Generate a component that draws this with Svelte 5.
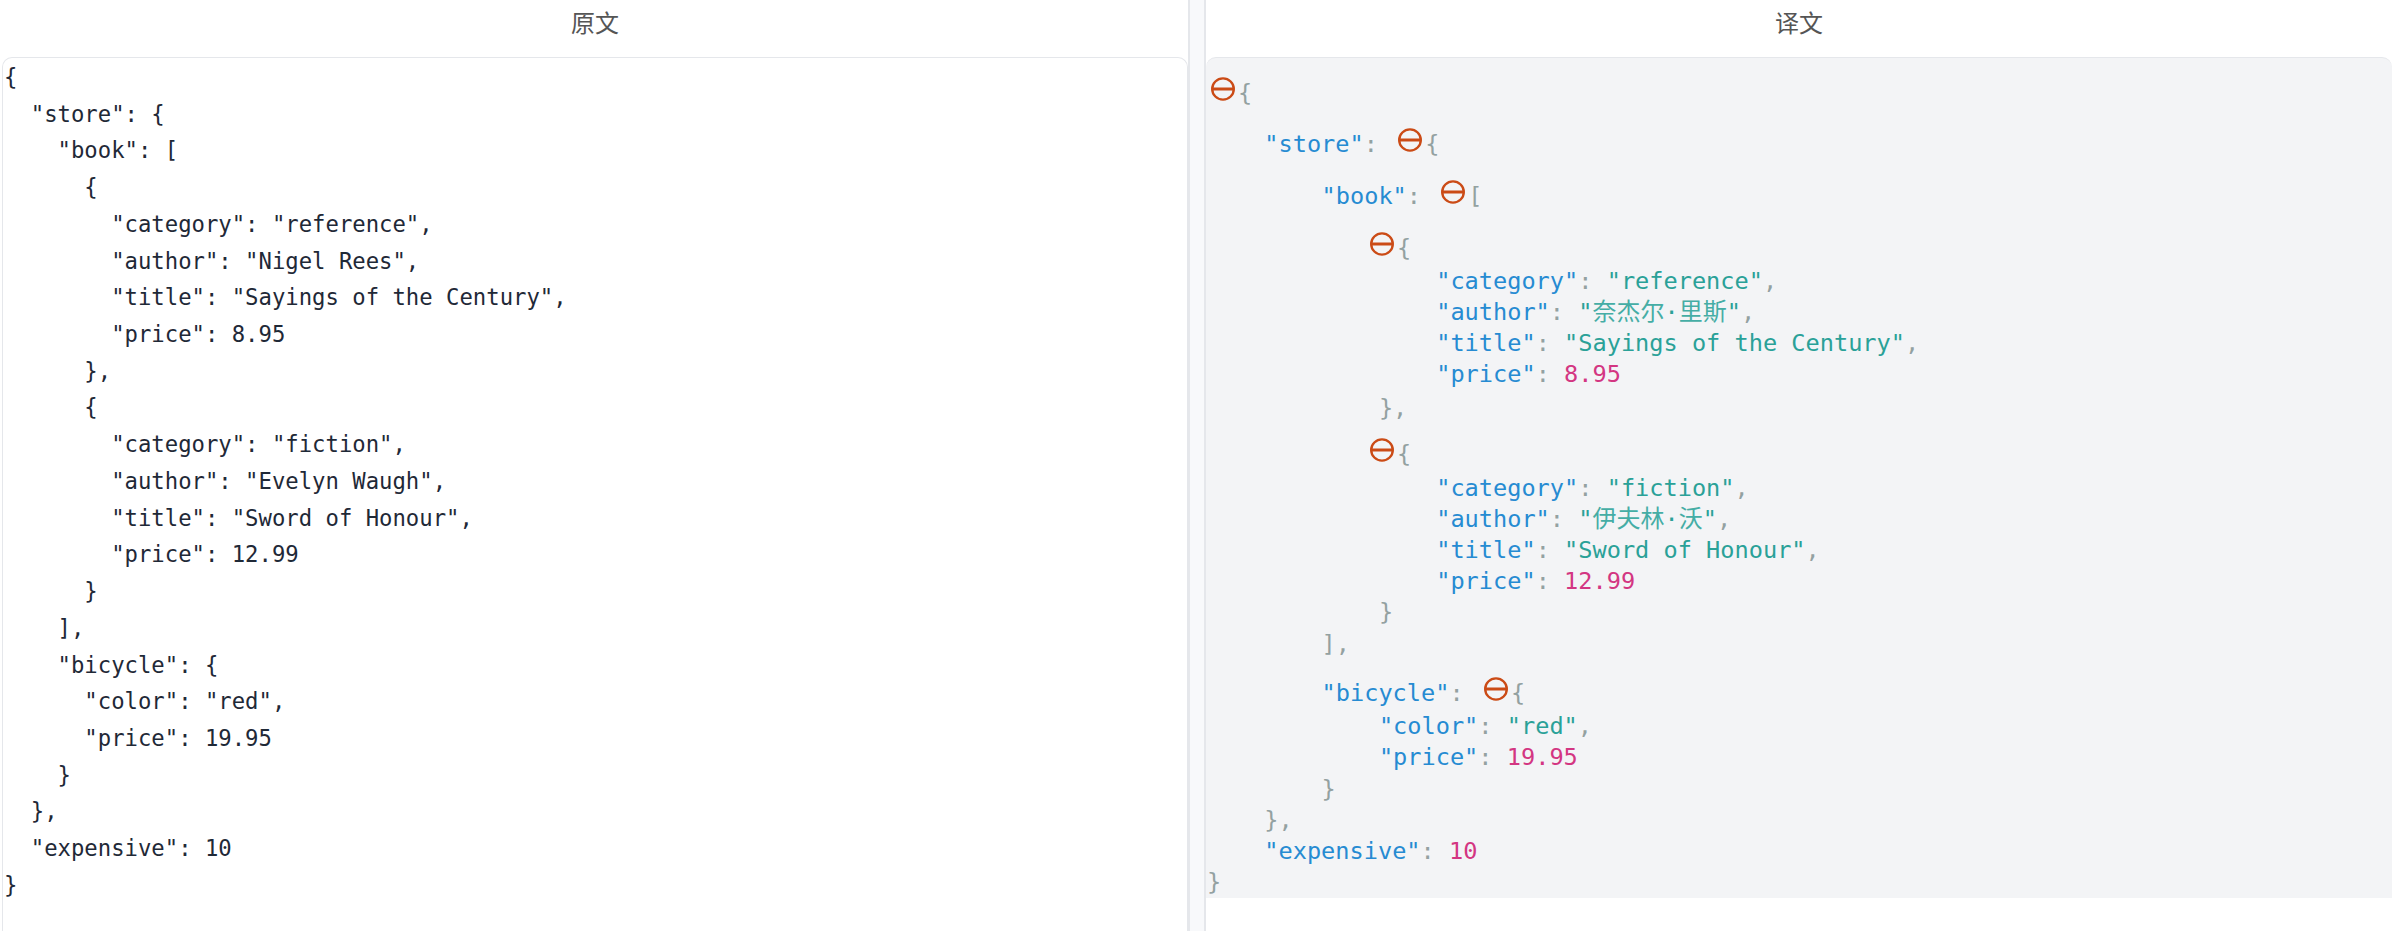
<script>
  const source = `{
  "store": {
    "book": [
      {
        "category": "reference",
        "author": "Nigel Rees",
        "title": "Sayings of the Century",
        "price": 8.95
      },
      {
        "category": "fiction",
        "author": "Evelyn Waugh",
        "title": "Sword of Honour",
        "price": 12.99
      }
    ],
    "bicycle": {
      "color": "red",
      "price": 19.95
    }
  },
  "expensive": 10
}`;

  // top = space above the row, the collapsible rows sit lower than plain ones
  const rows = [
    { depth: 0, top: 19, open: '{' },
    { depth: 1, top: 20, key: 'store', open: '{' },
    { depth: 2, top: 21, key: 'book', open: '[' },
    { depth: 3, top: 21, open: '{', pull: true },
    { depth: 4, top: 3, key: 'category', str: 'reference', comma: true },
    { depth: 4, key: 'author', cjk: ['奈杰尔', '里斯'], comma: true },
    { depth: 4, key: 'title', str: 'Sayings of the Century', comma: true },
    { depth: 4, key: 'price', num: '8.95' },
    { depth: 3, top: 3, close: '},' },
    { depth: 3, top: 14, open: '{', pull: true },
    { depth: 4, top: 4, key: 'category', str: 'fiction', comma: true },
    { depth: 4, key: 'author', cjk: ['伊夫林', '沃'], comma: true },
    { depth: 4, key: 'title', str: 'Sword of Honour', comma: true },
    { depth: 4, key: 'price', num: '12.99' },
    { depth: 3, close: '}' },
    { depth: 2, top: 1, close: '],' },
    { depth: 2, top: 17, key: 'bicycle', open: '{' },
    { depth: 3, top: 3, key: 'color', str: 'red', comma: true },
    { depth: 3, key: 'price', num: '19.95' },
    { depth: 2, top: 1, close: '}' },
    { depth: 1, close: '},' },
    { depth: 1, key: 'expensive', num: '10' },
    { depth: 0, close: '}' }
  ];
</script>

<style>
  :global(body) {
    margin: 0;
    background: #fff;
  }

  .compare {
    display: grid;
    grid-template-columns: 1188px 16px 1fr;
    height: 931px;
    overflow: hidden;
    font-family: "DejaVu Sans Mono", "Noto Sans CJK SC", monospace;
    font-size: 22.25px;
  }

  .pane {
    min-width: 0;
    display: flex;
    flex-direction: column;
  }

  .pane-left {
    padding-left: 2px;
  }

  .pane-right {
    padding-right: 3px;
    border-left: 2px solid #e5e7eb;
  }

  .divider {
    background: #f8f9fb;
    border-left: 2px solid #e5e7eb;
  }

  h2 {
    height: 57px;
    line-height: 44px;
    margin: 0;
    text-align: center;
    font-family: "Noto Sans CJK SC", sans-serif;
    font-size: 24px;
    font-weight: 400;
    color: #555;
  }

  .source {
    flex: 1;
    margin: 0;
    padding: 1px 1px;
    font: inherit;
    line-height: 36.72px;
    color: #1f2937;
    border: 1px solid #e5e7eb;
    border-bottom: 0;
    border-radius: 10px 10px 0 0;
  }

  .tree {
    margin: 0;
    font-size: 23.6px;
    background: #f3f4f6;
    color: #93a1a1;
    border-top: 1px solid #e5e7eb;
    border-radius: 10px 10px 0 0;
  }

  .row {
    height: 31px;
    line-height: 31px;
    white-space: pre;
  }

  .key { color: #268bd2; }
  .str { color: #2aa198; }
  .num { color: #d33682; }

  .cjk {
    font-size: 24px;
    line-height: 1;
    color: #45ada5;
  }

  .toggle {
    display: inline-block;
    width: 24px;
    height: 24px;
    margin: 0 3px 0 6px;
    vertical-align: 0;
  }

  .toggle.first {
    margin-left: 4px;
  }

  .toggle.pull {
    margin-left: -9px;
  }
</style>

<div class="compare">
  <section class="pane pane-left">
    <h2>原文</h2>
    <pre class="source">{source}</pre>
  </section>
  <div class="divider"></div>
  <section class="pane pane-right">
    <h2>译文</h2>
    <div class="tree">
      {#each rows as row, i}
        <div class="row" style="margin-top: {row.top ?? 0}px; padding-left: {row.depth * 57.3 + 1}px">
          {#if row.key}<span class="key">"{row.key}"</span>:{/if}{#if row.open}{#if row.key}{' '}{/if}<svg class="toggle" class:first={i === 0} class:pull={row.pull} viewBox="0 0 24 24" aria-hidden="true">
              <ellipse cx="12" cy="12" rx="10.8" ry="10.6" fill="none" stroke="#cb4b16" stroke-width="2.4" />
              <path d="M1 12h22" stroke="#cb4b16" stroke-width="3" />
            </svg>{row.open}{/if}{#if row.str}{' '}<span class="str">"{row.str}"</span>{/if}{#if row.cjk}{' '}<span class="str">"<span class="cjk">{row.cjk[0]}</span>·<span class="cjk">{row.cjk[1]}</span>"</span>{/if}{#if row.num}{' '}<span class="num">{row.num}</span>{/if}{#if row.comma},{/if}{#if row.close}{row.close}{/if}
        </div>
      {/each}
    </div>
  </section>
</div>
